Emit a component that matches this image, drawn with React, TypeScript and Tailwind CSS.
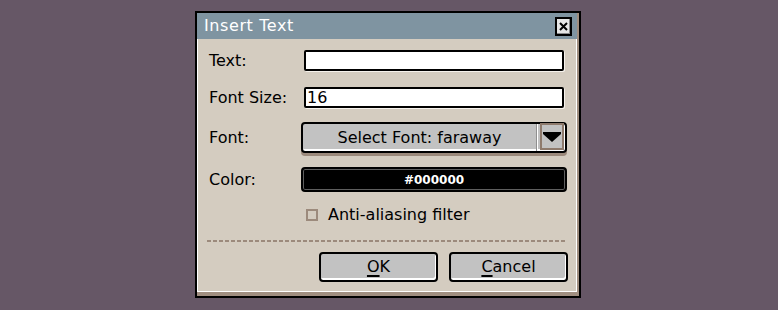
export default function App() {
  return (
    <div
      className="flex h-[310px] w-full bg-[#665766] pl-[195px] pt-[11px] text-[16px] leading-none text-black"
      style={{ fontFamily: '"DejaVu Sans", "Liberation Sans", sans-serif' }}
    >
      <div className="h-[287px] w-[386px] border-2 border-black bg-[#d4ccc0]">
        <div className="flex h-full flex-col border-r-2 border-b-4 border-[#a08e80]">
          {/* title bar */}
          <div className="flex h-[26px] items-center justify-between bg-[#7f94a1] pl-[7px] pr-[5px]">
            <span className="tracking-[0.6px] text-white">Insert Text</span>
            <div className="flex h-[19px] w-[17px] items-center justify-center border-2 border-black bg-[#e6e6e6] shadow-[inset_-1px_-1px_0_#8a8a8a]">
              <svg width="9" height="9" viewBox="0 0 9 9">
                <path d="M1 1L8 8M8 1L1 8" stroke="#000" strokeWidth="2" />
              </svg>
            </div>
          </div>

          {/* body */}
          <div className="flex flex-1 flex-col border-x border-b border-white pl-[11px] pr-[8px]">
            <div className="mt-[11px] flex h-[21px] items-center">
              <span className="w-[92px]">Text:</span>
              <div className="ml-[3px] h-[21px] w-[260px] rounded-[2px] border-2 border-black bg-white shadow-[1px_1px_0_#f6f2ec]" />
            </div>

            <div className="mt-[16px] flex h-[21px] items-center">
              <span className="w-[92px]">Font Size:</span>
              <div className="ml-[3px] flex h-[21px] w-[260px] items-center rounded-[2px] border-2 border-black bg-white pl-[1px] shadow-[1px_1px_0_#f6f2ec]">
                16
              </div>
            </div>

            <div className="mt-[14px] flex h-[31px] items-center">
              <span className="w-[92px]">Font:</span>
              <div className="flex h-[31px] w-[266px] items-stretch rounded-[4px] border-2 border-black bg-[#c2c2c2] shadow-[inset_-1px_-2px_0_#fff,0_3px_0_#9c8a7c]">
                <div className="flex flex-1 items-center justify-center border-r border-[#8f8f8f] pt-[1px]">
                  Select Font: faraway
                </div>
                <div className="flex w-[28px] items-center justify-center border-l border-white pb-[2px]">
                  <div className="flex h-[27px] w-[24px] items-center justify-center border-2 border-[#8e7a6c] bg-[#c2c2c2]">
                    <svg width="18" height="10" viewBox="0 0 18 10">
                      <path d="M0 0H18V2L9 10L0 2Z" fill="#000" />
                    </svg>
                  </div>
                </div>
              </div>
            </div>

            <div className="mt-[14px] flex h-[25px] items-center">
              <span className="w-[92px]">Color:</span>
              <div className="flex h-[25px] w-[266px] items-center justify-center rounded-[4px] border-2 border-black bg-black text-[12px] font-bold text-white shadow-[inset_0_0_0_1px_#5e5e5e]">
                #000000
              </div>
            </div>

            <div className="mt-[15px] flex h-[16px] items-center">
              <div className="ml-[97px] h-[12px] w-[12px] border-2 border-[#9c8a7c]" />
              <span className="ml-[10px]">Anti-aliasing filter</span>
            </div>

            <div className="-ml-[2px] mr-[1px] mt-[17px] h-[2px] bg-[repeating-linear-gradient(90deg,#9c8a7c_0_4px,transparent_4px_6px)]" />

            <div className="mt-[10px] flex justify-end gap-[11px]">
              <button className="flex h-[30px] w-[119px] items-center justify-center rounded-[4px] border-2 border-black bg-[#c2c2c2] shadow-[inset_-1px_-2px_0_#fff]">
                <span>
                  <span className="underline decoration-[2px] underline-offset-[3px]">O</span>K
                </span>
              </button>
              <button className="flex h-[30px] w-[119px] items-center justify-center rounded-[4px] border-2 border-black bg-[#c2c2c2] shadow-[inset_-1px_-2px_0_#fff]">
                <span>
                  <span className="underline decoration-[2px] underline-offset-[3px]">C</span>ancel
                </span>
              </button>
            </div>
          </div>
        </div>
      </div>
    </div>
  );
}
